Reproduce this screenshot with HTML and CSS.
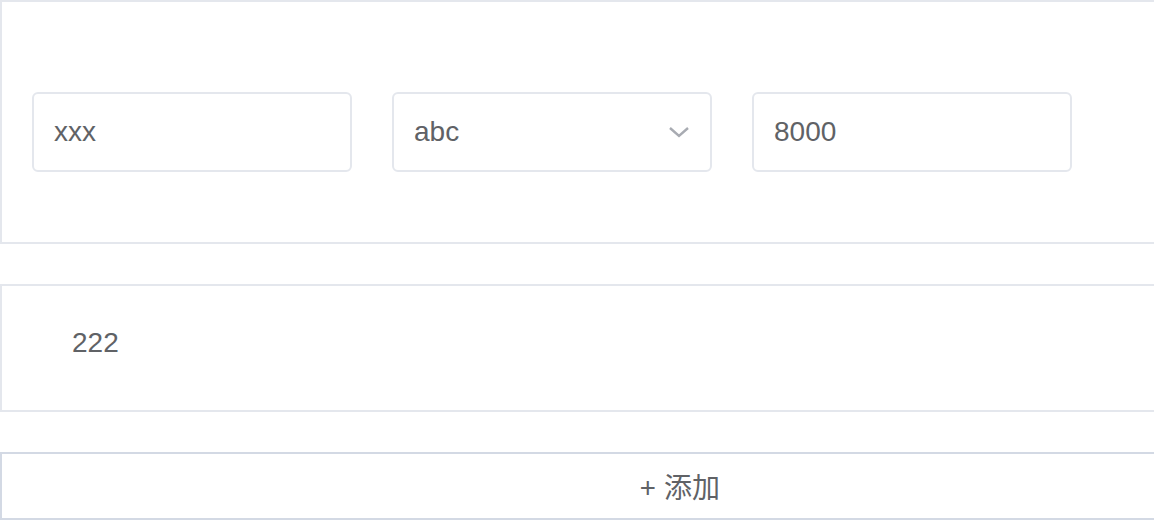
FILE: index.html
```html
<!DOCTYPE html>
<html lang="zh">
<head>
<meta charset="utf-8">
<link rel="stylesheet" href="styles.css">
</head>
<body>
<div class="page">
  <div class="panel form-panel">
    <div class="field"><span class="value">xxx</span></div>
    <div class="field select"><span class="value">abc</span>
      <svg class="chev" width="22" height="12" viewBox="0 0 22 12"><path d="M2 2 L11 10 L20 2" fill="none" stroke="#a8abb2" stroke-width="2.4"/></svg>
    </div>
    <div class="field"><span class="value">8000</span></div>
  </div>
  <div class="panel row-panel"><span class="value">222</span></div>
  <div class="panel add-btn"><span class="value">+ 添加</span></div>
</div>
</body>
</html>
```
FILE: styles.css
```css
html, body {
  margin: 0;
  padding: 0;
  background: #fff;
  overflow: hidden;
}
.page {
  width: 1360px;
  display: flex;
  flex-direction: column;
  gap: 40px;
  font-family: "Liberation Sans", "Noto Sans CJK SC", sans-serif;
  color: #606266;
  font-size: 28px;
}
.panel {
  box-sizing: border-box;
  border: 2px solid #e4e7ed;
  background: #fff;
}
.form-panel {
  height: 244px;
  padding: 90px 30px 0;
  display: flex;
  gap: 40px;
  align-items: flex-start;
}
.field {
  box-sizing: border-box;
  width: 320px;
  height: 80px;
  border: 2px solid #e4e7ed;
  border-radius: 6px;
  padding: 0 20px;
  display: flex;
  align-items: center;
  justify-content: space-between;
}
.row-panel {
  height: 128px;
  padding: 0 70px 10px;
  display: flex;
  align-items: center;
}
.add-btn {
  height: 68px;
  border-color: #d3d9e4;
  display: flex;
  align-items: center;
  justify-content: center;
}
.add-btn .value {
  font-family: "Noto Sans CJK SC", sans-serif;
  font-size: 28px;
  word-spacing: 2px;
}
```
